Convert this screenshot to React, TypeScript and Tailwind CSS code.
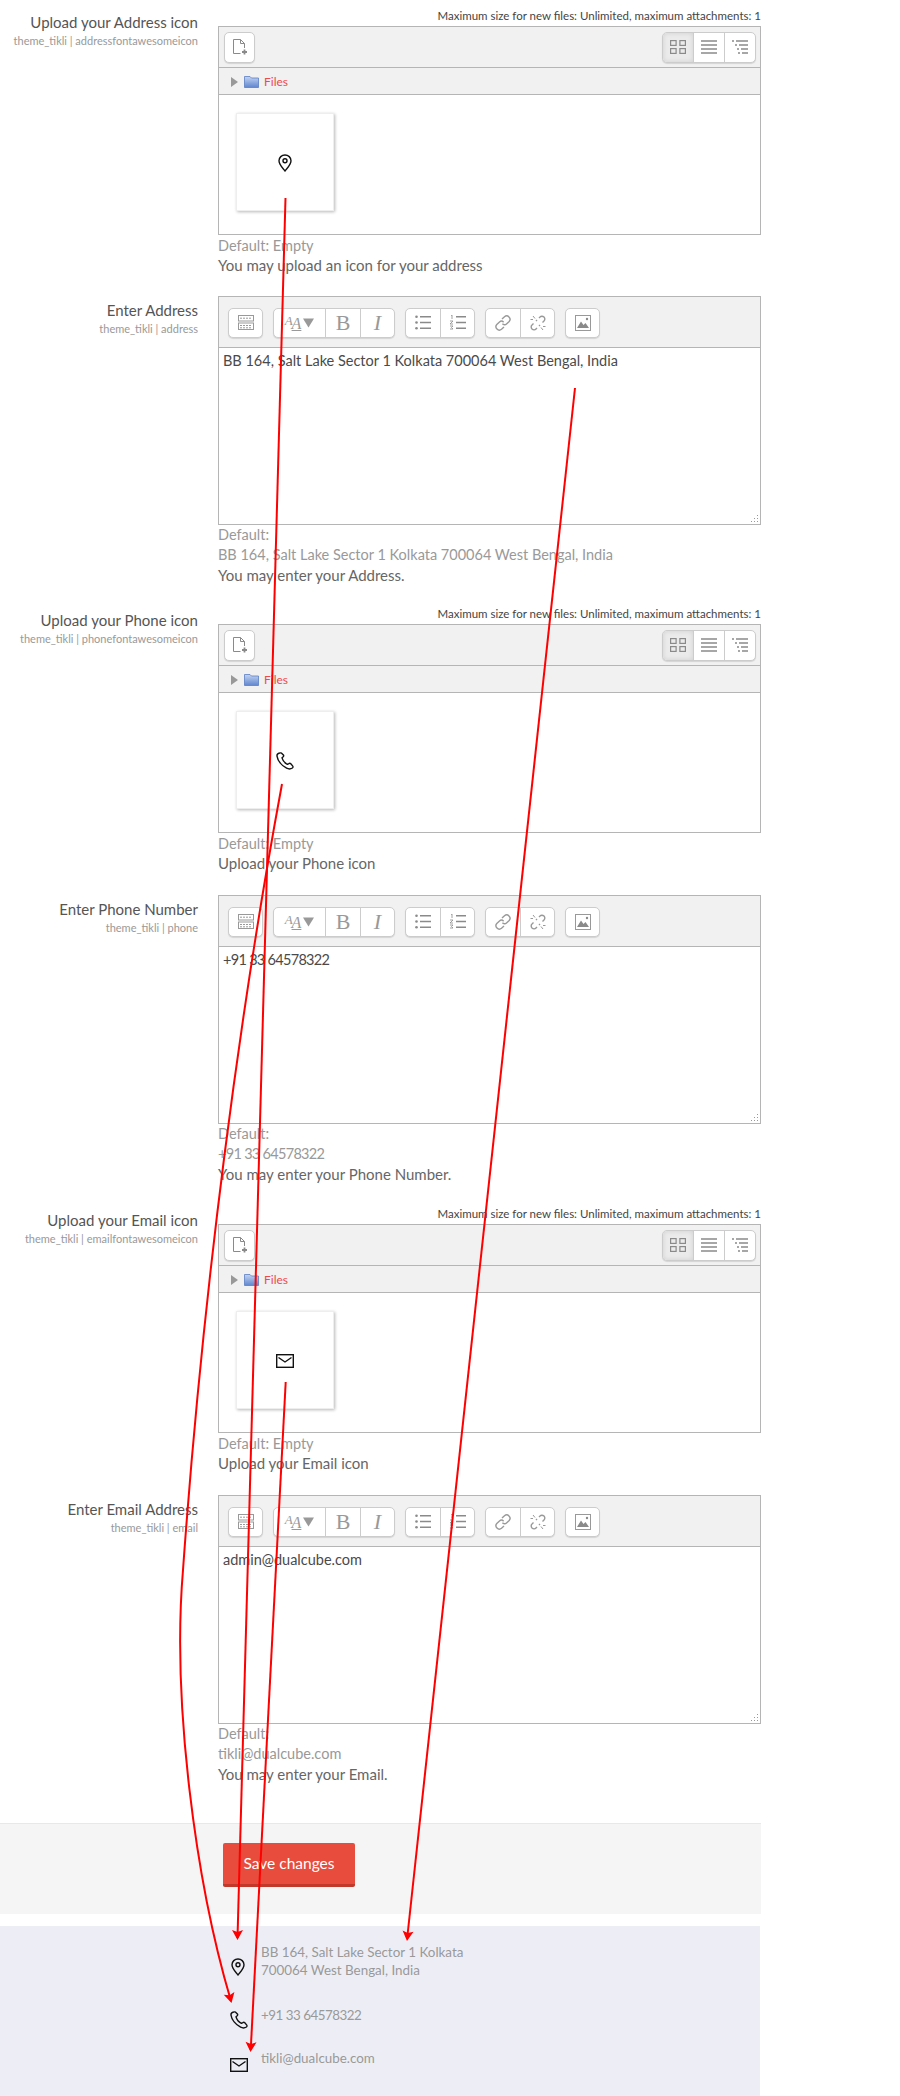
const btn = "bg-white border border-[#ccc] rounded-[5px] shadow-[0_1px_1px_rgba(0,0,0,0.12)] flex items-center";

function PinIcon({ className }: { className?: string }) {
  return (
    <svg viewBox="0 0 14 18" className={className} fill="none" stroke="#111" strokeWidth="1.4">
      <path d="M7 17 C5.5 14.6 1 11 1 6.8 C1 3.4 3.7 1 7 1 C10.3 1 13 3.4 13 6.8 C13 11 8.5 14.6 7 17 Z" />
      <circle cx="7" cy="6.8" r="2" />
    </svg>
  );
}

function PhoneIcon({ className }: { className?: string }) {
  return (
    <svg viewBox="0 0 18 18" className={className} fill="none" stroke="#111" strokeWidth="1.4" strokeLinejoin="round">
      <path d="M3.6 1 C2 1.3 0.8 2.6 1 4.2 C1.6 8.6 5.6 13.6 10.6 16.2 C12.6 17.2 14.6 17.2 16.4 16 C17.2 15.4 17.2 14.6 16.6 13.9 L14.8 11.8 C14.2 11.2 13.4 11.2 12.8 11.6 L11.4 12.4 C9 11.2 6.6 8 6 5.8 L7.2 4.8 C7.8 4.2 7.8 3.6 7.4 3 L5.6 1.2 C5 0.8 4.4 0.8 3.6 1 Z" />
    </svg>
  );
}

function MailIcon({ className }: { className?: string }) {
  return (
    <svg viewBox="0 0 18 14" className={className} fill="none" stroke="#111" strokeWidth="1.4">
      <rect x="0.7" y="0.7" width="16.6" height="12.6" />
      <path d="M2.5 3.5 L9 8 L15.5 3.5" />
    </svg>
  );
}

function FileManager({ icon }: { icon: React.ReactNode }) {
  return (
    <div className="border border-[#b5b5b5] h-[209px] flex flex-col bg-white">
      <div className="h-[41px] bg-[#f1f1f1] border-b border-[#b5b5b5] flex items-center justify-between pl-[5px] pr-[4px]">
        <div className={`${btn} w-[31px] h-[31px] justify-center`}>
          <svg viewBox="0 0 16 18" className="w-[16px] h-[18px]" fill="none" stroke="#8a8a8a" strokeWidth="1">
            <path d="M8.5 15.5 H1.5 V1.5 H8.5 L12.5 5.5 V10" />
            <path d="M8.5 1.5 V5.5 H12.5" />
            <path d="M12.5 11.5 V16.5 M10 14 H15" strokeWidth="1.8" />
          </svg>
        </div>
        <div className={`${btn} h-[31px] overflow-hidden`}>
          <div className="w-[31px] h-full bg-[#ebebeb] shadow-[inset_0_0_5px_rgba(0,0,0,0.12)] border-r border-[#ccc] flex items-center justify-center">
            <svg viewBox="0 0 16 14" className="w-[16px] h-[14px]" fill="none" stroke="#8a8a8a" strokeWidth="1.2">
              <rect x="0.6" y="0.6" width="5.5" height="4.8" />
              <rect x="9.9" y="0.6" width="5.5" height="4.8" />
              <rect x="0.6" y="8.6" width="5.5" height="4.8" />
              <rect x="9.9" y="8.6" width="5.5" height="4.8" />
            </svg>
          </div>
          <div className="w-[31px] h-full border-r border-[#ccc] flex items-center justify-center">
            <svg viewBox="0 0 16 14" className="w-[16px] h-[14px]" fill="none" stroke="#8a8a8a" strokeWidth="1.6">
              <path d="M0 1 H16 M0 5 H16 M0 9 H16 M0 13 H16" />
            </svg>
          </div>
          <div className="w-[30px] h-full flex items-center justify-center">
            <svg viewBox="0 0 16 14" className="w-[16px] h-[14px]" fill="none" stroke="#8a8a8a" strokeWidth="1.5">
              <path d="M0 1 H2 M4 1 H16 M3 5 H5 M7 5 H16 M5 9 H7 M9 9 H16 M6 13 H8 M10 13 H16" />
            </svg>
          </div>
        </div>
      </div>
      <div className="h-[27px] bg-[#f1f1f1] border-b border-[#b5b5b5] flex items-center pl-[12px] pt-[1px]">
        <svg viewBox="0 0 7 10" className="w-[7px] h-[10px]"><path d="M0 0 L7 5 L0 10 Z" fill="#999" /></svg>
        <svg viewBox="0 0 15 12" className="w-[15px] h-[12px] ml-[6px]">
          <defs>
            <linearGradient id="folder" x1="0" y1="0" x2="0" y2="1">
              <stop offset="0" stopColor="#c3d4f2" />
              <stop offset="1" stopColor="#5f86cf" />
            </linearGradient>
          </defs>
          <path d="M0.5 11.5 V0.5 H6 L7.5 2 H14.5 V11.5 Z" fill="url(#folder)" stroke="#5a7fc4" strokeWidth="0.8" />
        </svg>
        <span className="ml-[5px] text-[12px] leading-none text-[#ef4a4a]">Files</span>
      </div>
      <div className="flex-1 pt-[18px] pl-[17px]">
        <div className="w-[98px] h-[98px] pt-[2px] bg-white border border-[#eee] shadow-[1px_1px_3px_rgba(0,0,0,0.28)] flex items-center justify-center">
          {icon}
        </div>
      </div>
    </div>
  );
}

function Editor({ text, textClass }: { text: string; textClass: string }) {
  return (
    <div className="border border-[#b5b5b5] h-[229px] flex flex-col bg-white">
      <div className="h-[51px] bg-[#f1f1f1] border-b border-[#b5b5b5] flex items-center gap-[10px] pl-[9px] pt-[1px]">
        <div className={`${btn} w-[35px] h-[30px] justify-center`}>
          <svg viewBox="0 0 16 15" className="w-[16px] h-[15px]" fill="none" stroke="#999" strokeWidth="1">
            <rect x="0.5" y="0.5" width="15" height="5.5" />
            <rect x="0.5" y="8" width="15" height="6.5" />
            <path d="M2 3.2 H14 M2 10.5 H14 M2 12.8 H14" strokeDasharray="2 1" />
          </svg>
        </div>
        <div className={`${btn} h-[30px] w-[122px]`}>
          <div className="w-[52px] h-full border-r border-[#ccc] flex items-center justify-center font-[Liberation_Serif,serif] italic text-[#999]">
            <span className="text-[13px] leading-none mb-[5px]">A</span>
            <span className="text-[16px] leading-none underline mt-[3px] -ml-[1px]">A</span>
            <svg viewBox="0 0 12 10" className="w-[11px] h-[10px] ml-[2px]"><path d="M0 0 H12 L6 10 Z" fill="#999" /></svg>
          </div>
          <div className="w-[35px] h-full border-r border-[#ccc] flex items-center justify-center font-[Liberation_Serif,serif] text-[22px] text-[#999]">B</div>
          <div className="flex-1 h-full flex items-center justify-center font-[Liberation_Serif,serif] italic text-[22px] text-[#999]">I</div>
        </div>
        <div className={`${btn} h-[30px] w-[70px]`}>
          <div className="w-[35px] h-full border-r border-[#ccc] flex items-center justify-center">
            <svg viewBox="0 0 16 15" className="w-[16px] h-[15px]" fill="#8a8a8a" stroke="#8a8a8a">
              <circle cx="1.5" cy="1.8" r="1.3" stroke="none" />
              <circle cx="1.5" cy="7.5" r="1.3" stroke="none" />
              <circle cx="1.5" cy="13.2" r="1.3" stroke="none" />
              <path d="M5 1.8 H16 M5 7.5 H16 M5 13.2 H16" strokeWidth="1.5" />
            </svg>
          </div>
          <div className="flex-1 h-full flex items-center justify-center">
            <svg viewBox="0 0 16 15" className="w-[16px] h-[15px]" fill="none" stroke="#8a8a8a">
              <path d="M1 0.5 L2 0 V4 M0 6 H3 L0 9 H3 M0 11 H3 L1.5 12.5 L3 14 H0" strokeWidth="0.8" />
              <path d="M6 1.8 H16 M6 7.5 H16 M6 13.2 H16" strokeWidth="1.5" />
            </svg>
          </div>
        </div>
        <div className={`${btn} h-[30px] w-[70px]`}>
          <div className="w-[35px] h-full border-r border-[#ccc] flex items-center justify-center">
            <svg viewBox="0 0 16 16" className="w-[16px] h-[16px]" fill="none" stroke="#999" strokeWidth="1.4">
              <path d="M7 4 L9.5 1.7 C10.8 0.6 12.8 0.7 14 2 C15.2 3.2 15.3 5.2 14.2 6.5 L11.5 9 C10.3 10.1 8.5 10 7.4 8.8" />
              <path d="M9 12 L6.5 14.3 C5.2 15.4 3.2 15.3 2 14 C0.8 12.8 0.7 10.8 1.8 9.5 L4.5 7 C5.7 5.9 7.5 6 8.6 7.2" />
            </svg>
          </div>
          <div className="flex-1 h-full flex items-center justify-center">
            <svg viewBox="0 0 16 16" className="w-[16px] h-[16px]" fill="none" stroke="#999" strokeWidth="1.4">
              <path d="M9 3 L10 2 C11 0.9 12.8 0.9 14 2 C15.1 3.2 15.1 5 14 6 L12.5 7.5 M10 10 L9 11" />
              <path d="M7 13 L6 14 C5 15.1 3.2 15.1 2 14 C0.9 12.8 0.9 11 2 10 L3.5 8.5 M6 6 L7 5" />
              <path d="M3 1 L5 3.5 M0.5 4.5 H3 M13 15 L11 12.5 M15.5 11.5 H13" strokeWidth="1" />
            </svg>
          </div>
        </div>
        <div className={`${btn} h-[30px] w-[35px] justify-center`}>
          <svg viewBox="0 0 16 16" className="w-[16px] h-[16px]" fill="none" stroke="#999">
            <rect x="0.5" y="0.5" width="15" height="15" />
            <path d="M2 13 L6 6.5 L8.5 10 L10.5 8 L14 13 Z" fill="#8a8a8a" stroke="none" />
            <circle cx="12" cy="4" r="1.2" fill="#8a8a8a" stroke="none" />
          </svg>
        </div>
      </div>
      <div className={`relative flex-1 pl-[4px] pt-[3px] text-[14.5px] leading-[20px] text-[#4a4a4a] ${textClass}`}>
        {text}
        <svg viewBox="0 0 9 9" className="absolute right-[1px] bottom-[1px] w-[9px] h-[9px]" fill="#999">
          <rect x="7" y="1" width="1" height="1" />
          <rect x="4" y="4" width="1" height="1" />
          <rect x="7" y="4" width="1" height="1" />
          <rect x="1" y="7" width="1" height="1" />
          <rect x="4" y="7" width="1" height="1" />
          <rect x="7" y="7" width="1" height="1" />
        </svg>
      </div>
    </div>
  );
}

function Row({ label, sub, className, children }: { label: string; sub: string; className: string; children: React.ReactNode }) {
  return (
    <div className={`flex ${className}`}>
      <div className="w-[198px] shrink-0 text-right pt-[4px]">
        <div className="text-[15px] leading-[20px] text-[#555]">{label}</div>
        <div className="text-[11px] leading-[18px] text-[#999]">{sub}</div>
      </div>
      <div className="w-[543px] ml-[20px] shrink-0">{children}</div>
    </div>
  );
}

function UploadRow({ label, sub, hint, icon, className }: { label: string; sub: string; hint: string; icon: React.ReactNode; className: string }) {
  return (
    <Row label={label} sub={sub} className={className}>
      <div className="text-right text-[11.5px] leading-[16px] text-[#444] mb-[2px]">Maximum size for new files: Unlimited, maximum attachments: 1</div>
      <FileManager icon={icon} />
      <div className="mt-[1px] text-[14.5px] leading-[20px] text-[#999]">Default: Empty</div>
      <div className="text-[15px] leading-[18px] mb-[2px] text-[#666]">{hint}</div>
    </Row>
  );
}

function EditorRow({ label, sub, text, fallback, hint, className, textClass = "" }: { label: string; sub: string; text: string; fallback: string; hint: string; className: string; textClass?: string }) {
  return (
    <Row label={label} sub={sub} className={className}>
      <Editor text={text} textClass={textClass} />
      <div className="text-[14.5px] leading-[20px] text-[#999]">Default:</div>
      <div className={`text-[14.5px] leading-[20px] text-[#999] ${textClass}`}>{fallback}</div>
      <div className="text-[15px] leading-[20px] text-[#666]">{hint}</div>
    </Row>
  );
}

function Arrow({ d, x, y, angle }: { d: string; x: number; y: number; angle: number }) {
  return (
    <g>
      <path d={d} fill="none" stroke="#f00" strokeWidth="2" />
      <path d="M0 0 L-5.5 -10 L0 -8 L5.5 -10 Z" fill="#f00" transform={`translate(${x} ${y}) rotate(${angle})`} />
    </g>
  );
}

export default function App() {
  return (
    <div className="relative w-[900px] h-[2096px] bg-white overflow-hidden font-[Lato,sans-serif]">
      <div className="pt-[8px]">
        <UploadRow
          className="mb-[20px]"
          label="Upload your Address icon"
          sub="theme_tikli | addressfontawesomeicon"
          hint="You may upload an icon for your address"
          icon={<PinIcon className="w-[14px] h-[18px]" />}
        />
        <EditorRow
          className="mb-[21px]"
          label="Enter Address"
          sub="theme_tikli | address"
          text="BB 164, Salt Lake Sector 1 Kolkata 700064 West Bengal, India"
          fallback="BB 164, Salt Lake Sector 1 Kolkata 700064 West Bengal, India"
          hint="You may enter your Address."
        />
        <UploadRow
          className="mb-[21px]"
          label="Upload your Phone icon"
          sub="theme_tikli | phonefontawesomeicon"
          hint="Upload your Phone icon"
          icon={<PhoneIcon className="w-[18px] h-[18px]" />}
        />
        <EditorRow
          className="mb-[22px]"
          label="Enter Phone Number"
          sub="theme_tikli | phone"
          text="+91 33 64578322"
          fallback="+91 33 64578322"
          hint="You may enter your Phone Number."
          textClass="tracking-[-0.7px]"
        />
        <UploadRow
          className="mb-[21px]"
          label="Upload your Email icon"
          sub="theme_tikli | emailfontawesomeicon"
          hint="Upload your Email icon"
          icon={<MailIcon className="w-[18px] h-[14px]" />}
        />
        <EditorRow
          className="mb-[39px]"
          label="Enter Email Address"
          sub="theme_tikli | email"
          text="admin@dualcube.com"
          fallback="tikli@dualcube.com"
          hint="You may enter your Email."
        />
      </div>

      <div className="w-[761px] h-[91px] bg-[#f5f5f5] border-t border-[#e8e8e8] pt-[19px] pl-[223px]">
        <button className="w-[132px] h-[44px] rounded-[2px] bg-[#e74c3c] border-b-[3px] border-[#c0392b] text-white text-[15.5px]">Save changes</button>
      </div>

      <div className="w-[760px] h-[170px] mt-[12px] bg-[#edeef5] pl-[229px] pt-[17px] text-[13.4px] text-[#999]">
        <div className="flex">
          <div className="w-[32px] pt-[15px] pl-[2px]"><PinIcon className="w-[14px] h-[18px]" /></div>
          <div className="leading-[18px]">BB 164, Salt Lake Sector 1 Kolkata<br />700064 West Bengal, India</div>
        </div>
        <div className="flex mt-[27px]">
          <div className="w-[32px] pt-[5px] pl-[1px]"><PhoneIcon className="w-[18px] h-[18px]" /></div>
          <div className="leading-[18px] tracking-[-0.5px]">+91 33 64578322</div>
        </div>
        <div className="flex mt-[20px]">
          <div className="w-[32px] pt-[9px] pl-[1px]"><MailIcon className="w-[18px] h-[14px]" /></div>
          <div className="leading-[18px]">tikli@dualcube.com</div>
        </div>
      </div>

      <svg className="absolute left-0 top-0 w-[900px] h-[2096px] pointer-events-none" viewBox="0 0 900 2096">
        <Arrow d="M285.5 198 C 278 500 258 1200 237.5 1938" x={237.5} y={1940} angle={0} />
        <Arrow d="M575 388 L407.2 1938" x={407} y={1941} angle={6} />
        <Arrow d="M282 784 C 240 1010 203 1290 183 1570 C 172 1700 195 1880 231 2001" x={231.5} y={2003} angle={-14} />
        <Arrow d="M285.7 1382 L250.7 2050" x={250.5} y={2052} angle={3} />
      </svg>
    </div>
  );
}
